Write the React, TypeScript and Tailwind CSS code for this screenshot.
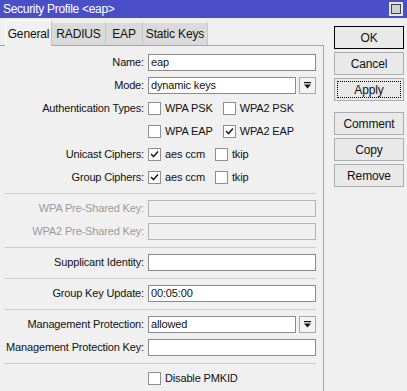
import React from "react";

const Check = ({ checked }: { checked?: boolean }) => (
  <div className="w-[13px] h-[13px] border border-[#8f8f8f] bg-white flex items-center justify-center shrink-0">
    {checked && (
      <svg width="9" height="9" viewBox="0 0 9 9">
        <path d="M1 4 L3.5 6.5 L8 1.5" stroke="#222" strokeWidth="1.6" fill="none" />
      </svg>
    )}
  </div>
);

const CB = ({ label, checked }: { label: string; checked?: boolean }) => (
  <div className="flex items-center gap-[4px] mr-[10px]">
    <Check checked={checked} />
    <span className="leading-none">{label}</span>
  </div>
);

const Row = ({ label, disabled, children }: { label?: string; disabled?: boolean; children: React.ReactNode }) => (
  <div className="flex items-center h-[17px]">
    <div className={`w-[145px] text-right pr-[1px] whitespace-nowrap ${disabled ? "text-[#9a9a9a]" : "text-[#111]"}`}>
      {label ? `${label}:` : ""}
    </div>
    <div className="ml-[3px] w-[168px] flex items-center h-full">{children}</div>
  </div>
);

const Input = ({ value, disabled }: { value?: string; disabled?: boolean }) => (
  <div
    className={`w-full h-[17px] border flex items-center px-[2px] leading-none ${
      disabled ? "border-[#b5b5b5] bg-[#f0f0f0]" : "border-[#8a8a8a] bg-white"
    }`}
  >
    {value}
  </div>
);

const Arrow = () => (
  <div className="w-[17px] h-[17px] ml-[3px] border border-[#a8a8a8] bg-[#f4f4f4] flex items-center justify-center shrink-0">
    <svg width="9" height="9" viewBox="0 0 9 9">
      <rect x="1" y="1" width="7" height="1.2" fill="#111" />
      <path d="M1 3.5 H8 L4.5 7.5 Z" fill="#111" />
    </svg>
  </div>
);

const Select = ({ value }: { value: string }) => (
  <div className="flex w-full h-[17px]">
    <div className="flex-1 h-[17px] border border-[#8a8a8a] bg-white flex items-center px-[2px] leading-none">{value}</div>
    <Arrow />
  </div>
);

const Sep = () => <div className="h-px bg-[#cdcdcd] ml-[5px] w-[311px] mt-px" />;

const Btn = ({ label, variant }: { label: string; variant?: "default" | "focus" }) => (
  <div
    className={`w-[70px] h-[23px] bg-[#e9e9e9] flex items-center justify-center ${
      variant === "default" ? "border border-black h-[21px]" : "border border-[#adadad]"
    }`}
  >
    {variant === "focus" ? (
      <div className="w-[64px] h-[17px] border border-dotted border-black flex items-center justify-center">{label}</div>
    ) : (
      label
    )}
  </div>
);

export default function App() {
  return (
    <div className="w-[407px] h-[391px] bg-[#f0f0f0] overflow-hidden font-['Liberation_Sans',Arial,sans-serif] text-[11px] tracking-[-0.15px] text-[#111]">
      <div className="h-[18px] bg-[#4b4fc7] flex items-center justify-between pl-[3px] pr-[4px]">
        <span className="text-white text-[12px] tracking-[-0.3px]">Security Profile &lt;eap&gt;</span>
        <div className="w-[14px] h-[14px] bg-[#e8e8e8] p-[2px]">
          <div className="w-full h-full border border-[#444] bg-[#d0d0d0]" />
        </div>
      </div>
      <div className="flex">
        <div className="w-[324px] flex flex-col">
          <div className="h-[27px] flex items-end pl-[5px]">
            <div className="relative z-10 h-[26px] w-[47px] mb-[-1px] bg-[#f0f0f0] border-t border-l border-r border-[#c4c4c4] border-t-white border-l-white flex items-center justify-center text-[12px]">
              General
            </div>
            <div className="h-[23px] w-[54px] bg-[#dadada] border-t border-r border-[#c8c8c8] border-t-[#eeeeee] flex items-center justify-center text-[12px]">
              RADIUS
            </div>
            <div className="h-[23px] w-[37px] bg-[#dadada] border-t border-r border-[#c8c8c8] border-t-[#eeeeee] flex items-center justify-center text-[12px]">
              EAP
            </div>
            <div className="h-[23px] w-[65px] bg-[#dadada] border-t border-r border-[#c8c8c8] border-t-[#eeeeee] flex items-center justify-center text-[12px]">
              Static Keys
            </div>
          </div>
          <div className="h-[346px] border-t border-r border-[#a8a8a8] pt-[8px] flex flex-col gap-[6px]">
            <Row label="Name">
              <Input value="eap" />
            </Row>
            <Row label="Mode">
              <Select value="dynamic keys" />
            </Row>
            <Row label="Authentication Types">
              <CB label="WPA PSK" />
              <CB label="WPA2 PSK" />
            </Row>
            <Row>
              <CB label="WPA EAP" />
              <CB label="WPA2 EAP" checked />
            </Row>
            <Row label="Unicast Ciphers">
              <CB label="aes ccm" checked />
              <CB label="tkip" />
            </Row>
            <Row label="Group Ciphers">
              <CB label="aes ccm" checked />
              <CB label="tkip" />
            </Row>
            <Sep />
            <Row label="WPA Pre-Shared Key" disabled>
              <Input disabled />
            </Row>
            <Row label="WPA2 Pre-Shared Key" disabled>
              <Input disabled />
            </Row>
            <Sep />
            <Row label="Supplicant Identity">
              <Input />
            </Row>
            <Sep />
            <Row label="Group Key Update">
              <Input value="00:05:00" />
            </Row>
            <Sep />
            <Row label="Management Protection">
              <Select value="allowed" />
            </Row>
            <Row label="Management Protection Key">
              <Input />
            </Row>
            <Sep />
            <Row>
              <CB label="Disable PMKID" />
            </Row>
          </div>
        </div>
        <div className="flex flex-col pl-[10px] pt-[8px] gap-[3px] text-[12px]">
          <Btn label="OK" variant="default" />
          <Btn label="Cancel" />
          <Btn label="Apply" variant="focus" />
          <div className="h-[5px]" />
          <Btn label="Comment" />
          <Btn label="Copy" />
          <Btn label="Remove" />
        </div>
      </div>
    </div>
  );
}
